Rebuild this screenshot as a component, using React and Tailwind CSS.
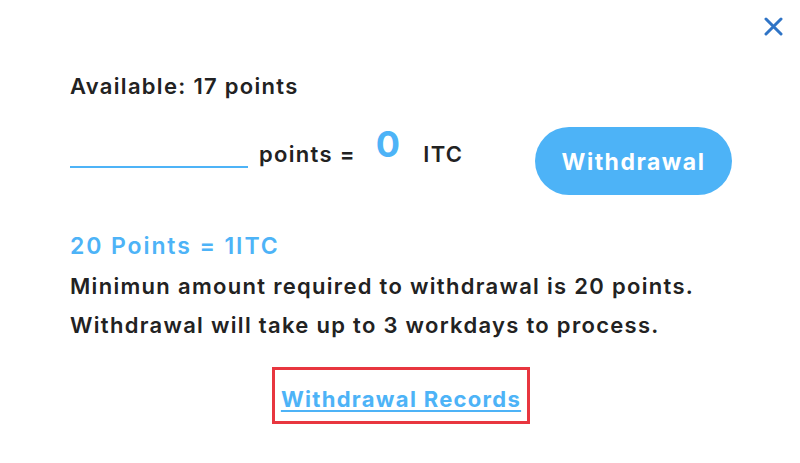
import React from 'react'

export default function App() {
  return (
    <div className="relative w-[800px] h-[463px] bg-white text-[#222] font-['Inter',sans-serif] tracking-[1.3px]">
      <button className="absolute left-[764px] top-[17px] text-[#2f74c6]">
        <svg width="19" height="19" viewBox="0 0 19 19" fill="none" stroke="currentColor" strokeWidth="3" strokeLinecap="round">
          <path d="M2 2 L17 17 M17 2 L2 17" />
        </svg>
      </button>
      <div className="pl-[70px] pr-[68px] pt-[72px]">
        <p className="text-[22px] font-semibold leading-[28px]">Available: 17 points</p>
        <div className="flex items-start mt-[26px]">
          <div className="flex items-end">
            <div className="w-[178px] h-[30px] mb-[-3px] border-b-2 border-[#4db3f7]"></div>
            <span className="ml-[11px] text-[22px] font-semibold leading-none">points =</span>
            <span className="ml-[20px] mb-[3px] text-[36px] font-bold text-[#4db3f7] leading-none">0</span>
            <span className="ml-[22px] text-[22px] font-semibold leading-none">ITC</span>
          </div>
          <button className="ml-auto mt-[1px] w-[197px] h-[68px] pt-[3px] rounded-full bg-[#4db3f7] text-white text-[23px] font-bold tracking-[1.5px]">Withdrawal</button>
        </div>
        <p className="mt-[37px] text-[23px] font-semibold text-[#4db3f7] leading-[28px] tracking-[1.9px]">20 Points = 1ITC</p>
        <p className="mt-[7px] text-[22px] font-semibold leading-[39px]">
          Minimun amount required to withdrawal is 20 points.<br />
          Withdrawal will take up to 3 workdays to process.
        </p>
        <div className="flex justify-center mt-[22px]">
          <div className="border-[3px] border-[#e8363f] w-[258px] h-[57px] pt-[7px] flex items-center justify-center">
            <a href="#" className="text-[22px] font-bold text-[#4db3f7] underline underline-offset-[3px] tracking-[1.3px]">Withdrawal Records</a>
          </div>
        </div>
      </div>
    </div>
  )
}
